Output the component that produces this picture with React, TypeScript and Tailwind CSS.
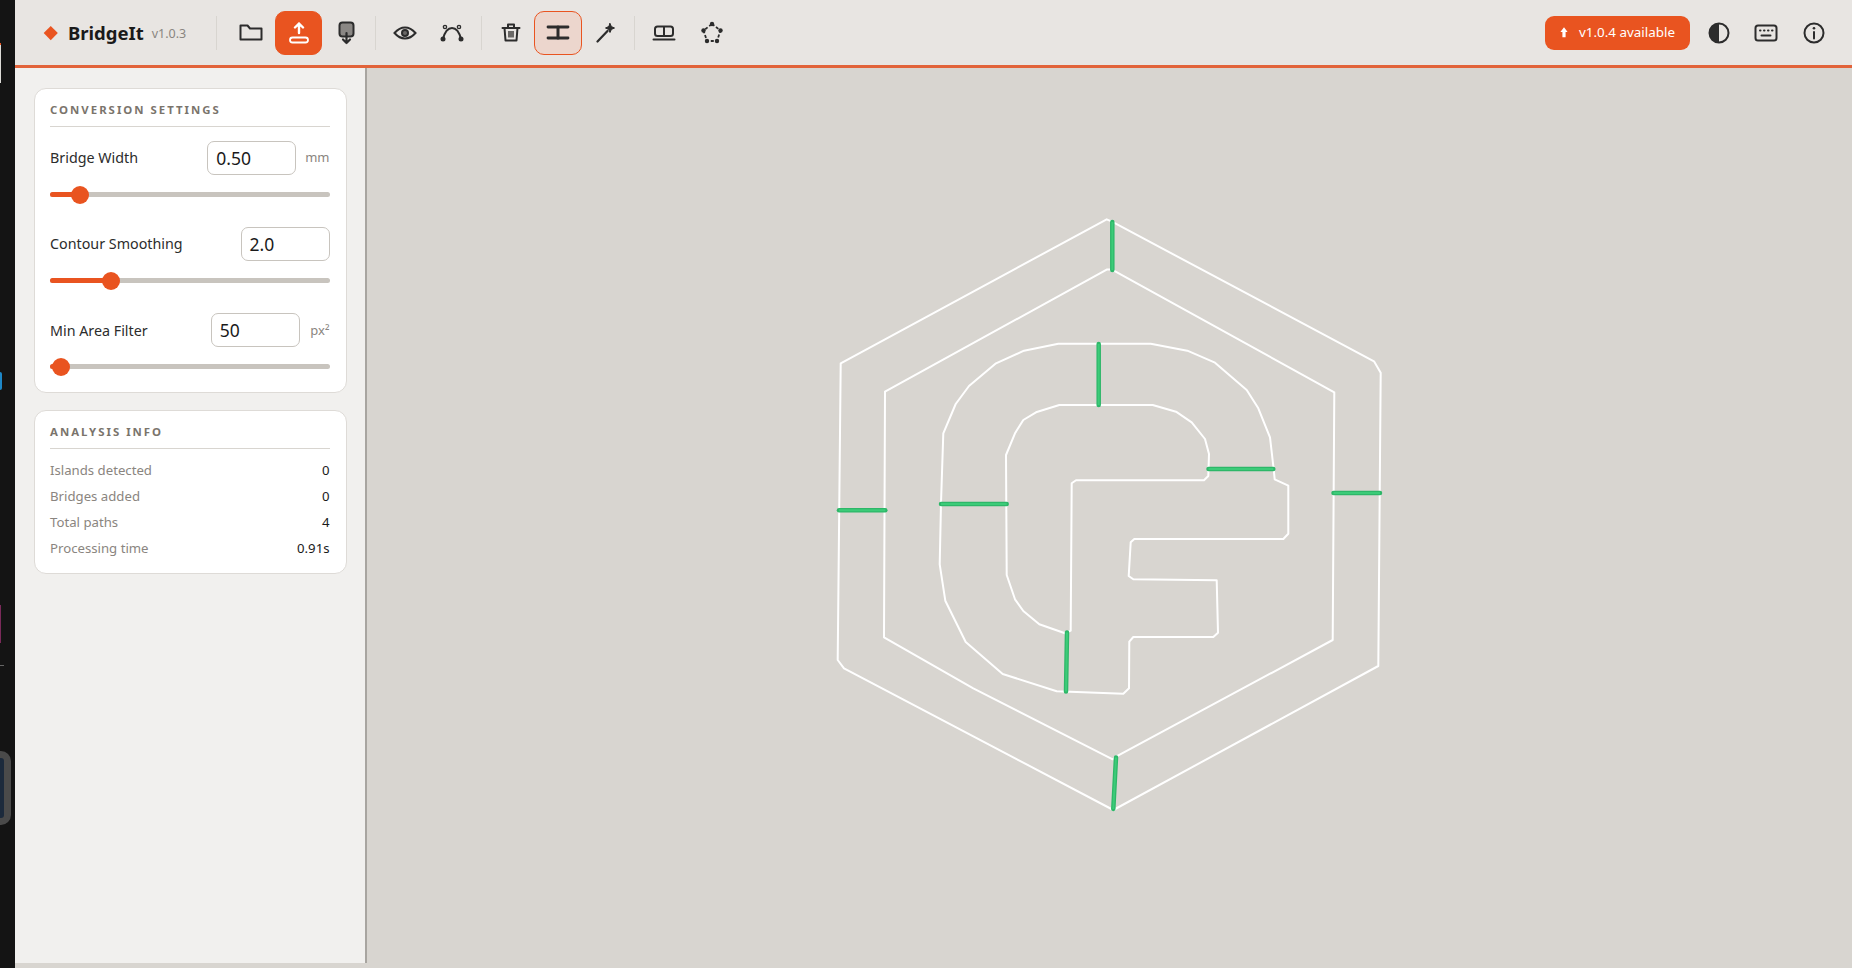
import React from "react";

const outerHex = "1106.7,219.3 1112,221.7 1374,361.3 1380.7,372.7 1378.3,666 1113.3,810 844,668.3 837.7,660 840.7,363.3";
const innerHex = "1106.7,269.6 1112,269.6 1334.3,392.3 1332.7,640 1116,756.7 1112.7,759.3 973.3,688.3 884,637.3 885,391.7";
const outerF =
  "1058.3,343.7 1024,350.7 996,363.3 969,386 955.7,404 943.3,433.3 941,503.3 939.7,564.3 945.3,600.7 965.7,642 1002.7,674 1056.7,691.3 1123.3,693.7 1129,688.3 1129.3,641.7 1133.3,637 1213.3,637 1218,632.7 1216.7,580.3 1133.3,579.3 1128.7,576 1130.7,542.3 1134.3,539 1283.3,539 1288.3,533.7 1288.3,485.7 1274.7,479.3 1273.7,469.3 1270,437.3 1258.3,408.3 1246.7,390 1215,362.7 1187.3,350.7 1150.7,343.7";
const innerF =
  "1059.3,405 1036,412.3 1023.3,420 1015,433.3 1006,455 1006.7,575 1015,599.3 1023.3,611 1039.3,624.3 1065,633.3 1070.7,630.7 1071.7,483.3 1076,480.3 1204,480.3 1208.3,476 1209,454 1205,439 1191.7,422.3 1176,411.7 1152.7,405";

const bridges = [
  [1112.3, 222, 1112.3, 270],
  [1098.7, 344, 1098.7, 405],
  [1208.5, 469, 1273.3, 469],
  [1333.5, 493, 1380, 493],
  [839, 510.3, 885.3, 510.3],
  [941, 504, 1006.7, 504],
  [1067, 632.5, 1066, 691.5],
  [1116, 757.5, 1113.3, 809],
];

const ToolButton: React.FC<{ active?: "solid" | "soft"; children: React.ReactNode }> = ({ active, children }) => {
  let cls = "text-[#2c2c2c] border-transparent";
  if (active === "solid") cls = "bg-[#e95420] text-white border-[#e95420]";
  if (active === "soft") cls = "bg-[#ecd6cd] text-[#2c2c2c] border-[#e95420]";
  return (
    <button className={`w-[47.5px] h-[44px] shrink-0 flex items-center justify-center rounded-[10px] border ${cls}`}>
      {children}
    </button>
  );
};

const Sep = () => <div className="w-px h-[34px] bg-[#d8d5d0] mx-[5px] shrink-0" />;

const SliderRow: React.FC<{ label: string; value: string; unit?: string; unitClass?: string; pct: number }> = ({
  label,
  value,
  unit,
  unitClass,
  pct,
}) => (
  <div className="flex flex-col">
    <div className="flex items-center h-[34px]">
      <span className="text-[14.3px] text-[#2c2c2c] flex-1">{label}</span>
      <div className="w-[89px] h-[34px] rounded-[7px] border border-[#c8c4be] bg-white flex items-center pl-[8px] text-[17.5px] text-[#1a1a1a]">
        {value}
      </div>
      {unit && <span className={`${unitClass} text-[13px] text-[#8a8580]`}>{unit}</span>}
    </div>
    <div className="relative h-[5px] mt-[17px] rounded-full bg-[#c8c4be]">
      <div className="absolute left-0 top-0 h-[5px] rounded-full bg-[#e95420]" style={{ width: `${pct}%` }} />
      <div
        className="absolute top-[-6.5px] w-[18px] h-[18px] -ml-[9px] rounded-full bg-[#e95420]"
        style={{ left: `${pct}%` }}
      />
    </div>
  </div>
);

const InfoRow: React.FC<{ label: string; value: string }> = ({ label, value }) => (
  <div className="flex justify-between items-center h-[26.2px] text-[13.2px]">
    <span className="text-[#8a8580]">{label}</span>
    <span className="text-[#1a1a1a]">{value}</span>
  </div>
);

const CardTitle: React.FC<{ children: React.ReactNode }> = ({ children }) => (
  <div className="text-[11.4px] font-bold tracking-[2px] text-[#7a746c] h-[27px] leading-[20px] border-b border-[#d8d5d0]">
    {children}
  </div>
);

export default function App() {
  return (
    <div className="flex h-screen w-full overflow-hidden bg-[#d8d5d0] font-['Noto_Sans',sans-serif]">
      <div className="w-[15px] shrink-0 bg-[#141414] relative overflow-hidden">
        <div className="absolute left-0 top-[43px] w-px h-[40px] bg-[#dcdad6] border-t-2 border-[#e95420]" />
        <div className="absolute left-[-2px] top-[372px] w-[4px] h-[18px] rounded-[3px] bg-[#1e88c8]" />
        <div className="absolute left-0 top-[605px] w-px h-[38px] bg-[#7a2a5a]" />
        <div className="absolute left-0 top-[665px] w-[4px] h-px bg-[#666666]" />
        <div className="absolute left-[-12px] top-[751px] w-[23px] h-[74px] rounded-[10px] bg-[#1c2a3c] border-[7px] border-[#4a4a4a]" />
      </div>
      <div className="flex-1 flex flex-col min-w-0">
        <header className="h-[68px] shrink-0 bg-[#e8e5e2] border-b-[3px] border-[#e2633a] flex items-center">
          <div className="w-[13px] h-[13px] ml-[29px] flex items-center justify-center">
            <div className="w-[9.5px] h-[9.5px] rotate-45 bg-[#e95420]" />
          </div>
          <span className="ml-[11px] text-[18.5px] font-bold text-[#1a1a1a]">BridgeIt</span>
          <span className="ml-[8px] mt-[3px] text-[12.5px] text-[#8a8580]">v1.0.3</span>
          <div className="w-px h-[34px] bg-[#d8d5d0] ml-[30px] mr-[10px] shrink-0" />
          <ToolButton>
            <svg width="24" height="17" viewBox="0 0 24 17" fill="none" stroke="currentColor" strokeWidth="2" strokeLinejoin="round">
              <path d="M1.5 15.5V1.5h7l2.5 3h11.5v11z" />
            </svg>
          </ToolButton>
          <ToolButton active="solid">
            <svg width="22" height="22" viewBox="0 0 22 22" fill="none" stroke="currentColor" strokeLinecap="round" strokeLinejoin="round">
              <path d="M11 11V1.5M7 5.5l4-4 4 4" strokeWidth="2.4" />
              <rect x="2" y="15.5" width="18" height="5" rx="2.5" strokeWidth="1.8" />
            </svg>
          </ToolButton>
          <ToolButton>
            <svg width="17" height="24" viewBox="0 0 17 24" fill="none" stroke="currentColor" strokeLinecap="round" strokeLinejoin="round">
              <rect x="1.5" y="1.5" width="14" height="14" rx="3" fill="#8a8784" strokeWidth="2" />
              <path d="M8.5 12v10M5 18.500 8.500 22l3.500-3.500" strokeWidth="2.2" />
            </svg>
          </ToolButton>
          <Sep />
          <ToolButton>
            <svg width="24" height="14" viewBox="0 0 24 14" fill="none" stroke="currentColor" strokeWidth="2">
              <path d="M1.5 7C5 3 8 1.500 12 1.500S19 3 22.500 7C19 11 16 12.500 12 12.500S5 11 1.500 7z" />
              <circle cx="12" cy="7" r="3" fill="#6a6866" />
            </svg>
          </ToolButton>
          <ToolButton>
            <svg width="24" height="18" viewBox="0 0 24 18" fill="none" stroke="currentColor" strokeWidth="2">
              <path d="M3 15C5 7 9 4 12 4s7 3 9 11" />
              <circle cx="3" cy="15" r="2.500" fill="currentColor" stroke="none" />
              <circle cx="21" cy="15" r="2.500" fill="currentColor" stroke="none" />
              <circle cx="5" cy="3" r="1.600" strokeWidth="1.400" />
              <circle cx="19" cy="3" r="1.600" strokeWidth="1.400" />
            </svg>
          </ToolButton>
          <Sep />
          <ToolButton>
            <svg width="20" height="19" viewBox="0 0 20 19" fill="none" stroke="currentColor" strokeWidth="2" strokeLinejoin="round" strokeLinecap="round">
              <path d="M1.500 5h17M7 5V1.500h6V5M3.500 5l1 12.500h11l1-12.500" />
              <rect x="7" y="8" width="6" height="6.500" fill="#6a6866" stroke="none" />
            </svg>
          </ToolButton>
          <ToolButton active="soft">
            <svg width="24" height="15" viewBox="0 0 24 15" fill="none" stroke="currentColor" strokeWidth="2.800" strokeLinecap="round">
              <path d="M2 2h20M2 13h20" />
              <path d="M12 2v11" strokeWidth="3" />
            </svg>
          </ToolButton>
          <ToolButton>
            <svg width="20" height="21" viewBox="0 0 20 21" fill="none" stroke="currentColor" strokeWidth="2.200" strokeLinecap="round">
              <path d="M1.500 19.500 11.500 9" />
              <path d="M14 1.500l1.400 3.100 3.100 1.400-3.100 1.400L14 10.500l-1.400-3.100L9.500 6l3.100-1.400z" fill="currentColor" strokeWidth="1" strokeLinejoin="round" />
            </svg>
          </ToolButton>
          <Sep />
          <ToolButton>
            <svg width="24" height="16" viewBox="0 0 24 16" fill="none" stroke="currentColor" strokeWidth="2">
              <rect x="3" y="1.500" width="18" height="9.500" rx="2.500" />
              <path d="M12 1.500V11" />
              <path d="M1.500 14.500h21" strokeLinecap="round" />
            </svg>
          </ToolButton>
          <ToolButton>
            <svg width="24" height="24" viewBox="0 0 24 24" fill="none" stroke="currentColor" strokeWidth="1.800">
              <path d="M12 3 20.500 9.500 17 20H7L3.500 9.500z" strokeDasharray="3 2" />
              <g fill="currentColor" stroke="none">
                <circle cx="12" cy="3" r="2.200" />
                <circle cx="20.500" cy="9.500" r="2.200" />
                <circle cx="17" cy="20" r="2.200" />
                <circle cx="7" cy="20" r="2.200" />
                <circle cx="3.500" cy="9.500" r="2.200" />
              </g>
            </svg>
          </ToolButton>
          <div className="flex-1" />
          <button className="w-[145px] h-[34px] rounded-[9px] bg-[#e95420] text-white text-[13.4px] flex items-center justify-center gap-[11px] mr-[5px]">
            <svg width="8" height="11" viewBox="0 0 10 13" fill="currentColor">
              <path d="M5 0 9.500 6H7v6.500H3V6H.500z" />
            </svg>
            v1.0.4 available
          </button>
          <ToolButton>
            <svg width="22" height="22" viewBox="0 0 22 22">
              <circle cx="11" cy="11" r="9.500" fill="none" stroke="currentColor" strokeWidth="2" />
              <path d="M11 1.500a9.500 9.500 0 0 0 0 19z" fill="currentColor" />
            </svg>
          </ToolButton>
          <ToolButton>
            <svg width="24" height="18" viewBox="0 0 24 18" fill="none" stroke="currentColor" strokeWidth="2" strokeLinecap="round">
              <rect x="1.500" y="1.500" width="21" height="15" rx="2.500" />
              <path d="M6 6.500h.5M10 6.500h.5M14 6.500h.5M18 6.500h.5" strokeWidth="2" />
              <path d="M7.500 11.500h9" />
            </svg>
          </ToolButton>
          <ToolButton>
            <svg width="22" height="22" viewBox="0 0 22 22" fill="none" stroke="currentColor" strokeWidth="2" strokeLinecap="round">
              <circle cx="11" cy="11" r="9.500" />
              <path d="M11 10v6.500" />
              <circle cx="11" cy="6.300" r="1.300" fill="currentColor" stroke="none" />
            </svg>
          </ToolButton>
          <div className="w-[14.5px] shrink-0" />
        </header>
        <div className="flex-1 flex min-h-0">
          <aside className="w-[352px] shrink-0 flex flex-col mb-[5px] bg-[#f1f0ee] border-r-2 border-[#a8a5a0] pl-[18.5px] pr-[18px] pt-[20px] gap-[16.5px]">
            <section className="bg-white rounded-[12px] border border-[#dedbd7] pt-[11px] pl-[15.5px] pr-[16.5px] h-[305px]">
              <CardTitle>CONVERSION SETTINGS</CardTitle>
              <div className="flex flex-col gap-[30.2px] mt-[14px]">
                <SliderRow label="Bridge Width" value="0.50" unit="mm" unitClass="ml-[9px]" pct={10.7} />
                <SliderRow label="Contour Smoothing" value="2.0" pct={21.8} />
                <SliderRow label="Min Area Filter" value="50" unit="px²" unitClass="ml-[10.5px]" pct={4} />
              </div>
            </section>
            <section className="bg-white rounded-[12px] border border-[#dedbd7] pt-[11px] pl-[15.5px] pr-[16.5px] h-[164px]">
              <CardTitle>ANALYSIS INFO</CardTitle>
              <div className="mt-[9px]">
                <InfoRow label="Islands detected" value="0" />
                <InfoRow label="Bridges added" value="0" />
                <InfoRow label="Total paths" value="4" />
                <InfoRow label="Processing time" value="0.91s" />
              </div>
            </section>
          </aside>
          <main className="flex-1 min-w-0 bg-[#d8d5d0]">
            <svg className="block w-full h-full" viewBox="367 68 1485 900" preserveAspectRatio="xMinYMin meet" fill="none">
              <g stroke="#ffffff" strokeWidth="2" strokeLinejoin="round">
                <polygon points={outerHex} />
                <polygon points={innerHex} />
                <polygon points={outerF} />
                <polygon points={innerF} />
              </g>
              <g stroke="#2db768" strokeWidth="4.500" strokeLinecap="round">
                {bridges.map((b, i) => (
                  <line key={i} x1={b[0]} y1={b[1]} x2={b[2]} y2={b[3]} />
                ))}
              </g>
              <g stroke="#3ccb78" strokeWidth="2">
                {bridges.map((b, i) => (
                  <line key={i} x1={b[0]} y1={b[1]} x2={b[2]} y2={b[3]} />
                ))}
              </g>
            </svg>
          </main>
        </div>
      </div>
    </div>
  );
}
